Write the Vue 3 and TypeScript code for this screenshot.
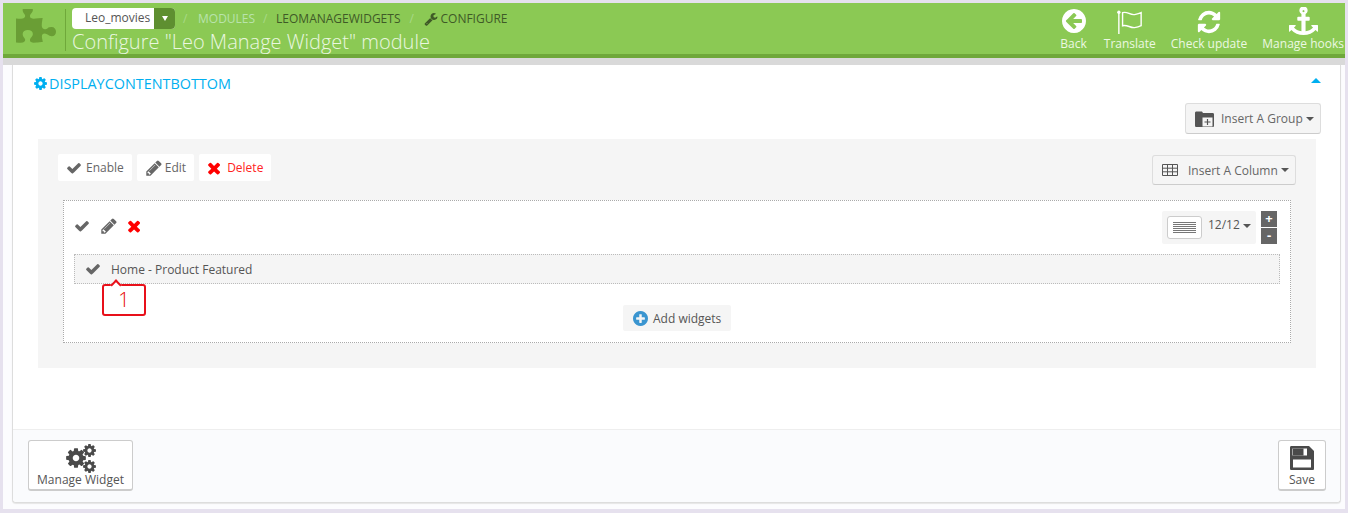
<script setup lang="ts">
const P = {
  check: 'M1671 566q0 40-28 68l-724 724-136 136q-28 28-68 28t-68-28l-136-136-362-362q-28-28-28-68t28-68l136-136q28-28 68-28t68 28l294 295 656-657q28-28 68-28t68 28l136 136q28 28 28 68z',
  times: 'M1298 1322q0 40-28 68l-136 136q-28 28-68 28t-68-28l-294-294-294 294q-28 28-68 28t-68-28l-136-136q-28-28-28-68t28-68l294-294-294-294q-28-28-28-68t28-68l136-136q28-28 68-28t68 28l294 294 294-294q28-28 68-28t68 28l136 136q28 28 28 68t-28 68l-294 294 294 294q28 28 28 68z',
  pencil: 'M491 1536l91-91-235-235-91 91v107h128v128h107zm523-928q0-22-22-22-10 0-17 7l-542 542q-7 7-7 17 0 22 22 22 10 0 17-7l542-542q7-7 7-17zm-54-192l416 416-832 832h-416v-416zm683 96q0 53-37 90l-166 166-416-416 166-165q36-38 90-38 53 0 91 38l235 234q37 39 37 91z',
  wrench: 'M448 1472q0-26-19-45t-45-19-45 19-19 45 19 45 45 19 45-19 19-45zm644-420l-682 682q-37 37-90 37-52 0-91-37l-106-108q-38-36-38-90 0-53 38-91l681-681q39 98 114.5 173.5t173.5 114.5zm634-435q0 39-23 106-47 134-164.5 217.5t-258.5 83.5q-185 0-316.5-131.5t-131.5-316.5 131.5-316.5 316.5-131.5q58 0 121.5 16.5t107.5 46.5q16 11 16 28t-16 28l-293 169v224l193 107q5-3 79-48.5t135.5-81 70.5-35.5q15 0 23.5 10t8.5 25z',
  cog: 'M1152 896q0-106-75-181t-181-75-181 75-75 181 75 181 181 75 181-75 75-181zm512-109v222q0 12-8 23t-20 13l-185 28q-19 54-39 91 35 50 107 138 10 12 10 25t-9 23q-27 37-99 108t-94 71q-12 0-26-9l-138-108q-44 23-91 38-16 136-29 186-7 28-36 28h-222q-14 0-24.5-8.5t-11.5-21.5l-28-184q-49-16-90-37l-141 107q-10 9-25 9-14 0-25-11-126-114-165-168-7-10-7-23 0-12 8-23 15-21 51-66.5t54-70.5q-27-50-41-99l-183-27q-13-2-21-12.5t-8-23.5v-222q0-12 8-23t19-13l186-28q14-46 39-92-40-57-107-138-10-12-10-24 0-10 9-23 26-36 98.5-107.5t94.5-71.5q13 0 26 10l138 107q44-23 91-38 16-136 29-186 7-28 36-28h222q14 0 24.5 8.5t11.5 21.5l28 184q49 16 90 37l142-107q9-9 24-9 13 0 25 10 129 119 165 170 7 8 7 22 0 12-8 23-15 21-51 66.5t-54 70.5q26 50 41 98l183 28q13 2 21 12.5t8 23.5z',
  refresh: 'M1639 1056q0 5-1 7-64 268-268 434.5t-478 166.5q-146 0-282.5-55t-243.5-157l-129 129q-19 19-45 19t-45-19-19-45v-448q0-26 19-45t45-19h448q26 0 45 19t19 45-19 45l-137 137q71 66 161 102t187 36q134 0 250-65t186-179q11-17 53-117 8-23 30-23h192q13 0 22.5 9.5t9.5 22.5zm25-800v448q0 26-19 45t-45 19h-448q-26 0-45-19t-19-45 19-45l138-138q-148-137-349-137-134 0-250 65t-186 179q-11 17-53 117-8 23-30 23h-199q-13 0-22.5-9.5t-9.5-22.5v-7q65-268 270-434.5t480-166.5q146 0 284 55.5t245 156.5l130-129q19-19 45-19t45 19 19 45z',
  anchor: 'M960 256q0-26-19-45t-45-19-45 19-19 45 19 45 45 19 45-19 19-45zm832 888v352q0 22-20 30-8 2-12 2-12 0-23-9l-93-93q-119 143-318.5 226.5t-429.5 83.5-429.5-83.5-318.5-226.5l-93 93q-9 9-23 9-4 0-12-2-20-8-20-30v-352q0-14 9-23t23-9h352q22 0 30 20 8 19-7 35l-100 100q67 91 189.5 153.5t271.5 82.5v-647h-192q-26 0-45-19t-19-45v-128q0-26 19-45t45-19h192v-163q-58-34-93-92.5t-35-128.5q0-106 75-181t181-75 181 75 75 181q0 70-35 128.5t-93 92.5v163h192q26 0 45 19t19 45v128q0 26-19 45t-45 19h-192v647q149-20 271.5-82.5t189.5-153.5l-100-100q-15-16-7-35 8-20 30-20h352q14 0 23 9t9 23z',
  back: 'M1280 960v-128q0-26-19-45t-45-19h-502l189-189q19-19 19-45t-19-45l-91-91q-18-18-45-18t-45 18l-362 362-91 91q-18 18-18 45t18 45l91 91 362 362q18 18 45 18t45-18l91-91q18-18 18-45t-18-45l-189-189h502q26 0 45-19t19-45zm256-64q0 209-103 385.5t-279.5 279.5-385.5 103-385.5-103-279.5-279.5-103-385.5 103-385.5 279.5-279.5 385.5-103 385.5 103 279.5 279.5 103 385.5z',
  plus: 'M1216 960v-128q0-26-19-45t-45-19h-256v-256q0-26-19-45t-45-19h-128q-26 0-45 19t-19 45v256h-256q-26 0-45 19t-19 45v128q0 26 19 45t45 19h256v256q0 26 19 45t45 19h128q26 0 45-19t19-45v-256h256q26 0 45-19t19-45zm320-64q0 209-103 385.5t-279.5 279.5-385.5 103-385.5-103-279.5-279.5-103-385.5 103-385.5 279.5-279.5 385.5-103 385.5 103 279.5 279.5 103 385.5z',
  puzzle: 'M1664 1098q0 81-44.5 135t-123.5 54q-41 0-77.5-17.5t-59-38-56.5-38-71-17.5q-110 0-110 124 0 39 16 115t15 115v5q-22 0-33 1-34 3-97.5 11.5t-115.5 13.5-98 5q-61 0-103-26.5t-42-83.5q0-37 17.5-71t38-56.5 38-59 17.5-77.5q0-79-54-123.5t-135-44.5q-84 0-143 45.5t-59 127.5q0 43 15 83t33.5 64.5 33.5 53 15 50.5q0 45-46 89-37 35-117 35-95 0-245-24-9-2-27.5-4t-27.5-4l-13-2q-2 0-3-1-2 0-2-1v-1024q2 1 17.5 3.5t34 5 21.5 3.5q150 24 245 24 80 0 117-35 46-44 46-89 0-22-15-50.5t-33.5-53-33.5-64.5-15-83q0-82 59-127.5t144-45.5q80 0 134 44.5t54 123.5q0 41-17.5 77.5t-38 59-38 56.5-17.5 71q0 57 42 83.5t103 26.5q64 0 180-15t163-17v2q-1 2-3.5 17.5t-5 34-3.5 21.5q-24 150-24 245 0 80 35 117 44 46 89 46 22 0 50.5-15t53-33.5 64.5-33.5 83-15q82 0 127.5 59t45.5 143z'
}
const V = '0 0 1792 1792'
</script>

<template>
  <div class="page">
    <header class="head">
      <svg class="puzzle" viewBox="128 128 1536 1536" preserveAspectRatio="none"><path :d="P.puzzle" /></svg>
      <div class="head-main">
        <div class="crumbs">
          <div class="shop"><span class="shop-name">Leo_movies</span><span class="shop-arrow"><i></i></span></div>
          <span class="sep s1">/</span>
          <span class="c-light">MODULES</span>
          <span class="sep s2">/</span>
          <span class="c-dark">LEOMANAGEWIDGETS</span>
          <span class="sep s3">/</span>
          <span class="c-dark c-conf"><svg class="wr" :viewBox="V"><path :d="P.wrench" /></svg>CONFIGURE</span>
        </div>
        <h1>Configure "Leo Manage Widget" module</h1>
      </div>
      <nav class="tools">
        <a class="tool t-back"><svg viewBox="0 128 1536 1536"><path :d="P.back" /></svg>Back</a>
        <a class="tool t-tr">
          <svg viewBox="0 0 28 26"><circle cx="2" cy="2.500" r="1.800" /><path class="fl" d="M2 3v23" /><path class="fl" d="M6 3c5-2 8 3 13 2 3-.5 5-1 7-2v14c-2 1-4 1.700-7 2-5 .5-8-3.500-13-2z" /></svg>Translate</a>
        <a class="tool t-ch"><svg :viewBox="V"><path :d="P.refresh" /></svg>Check update</a>
        <a class="tool t-mh"><svg :viewBox="V"><path :d="P.anchor" /></svg>Manage hooks</a>
      </nav>
    </header>
    <div class="strip"></div>

    <div class="area">
      <section class="panel">
        <div class="panel-body">
          <div class="heading">
            <span class="h-title"><svg :viewBox="V"><path :d="P.cog" /></svg>DISPLAYCONTENTBOTTOM</span>
            <i class="up"></i>
          </div>
          <div class="group-bar">
            <button class="btn b-group">
              <svg class="ic-folder" viewBox="0 0 19 16"><path d="M0 2C0 1 .6.500 1.500.500H7L8 2h9.500c1 0 1.500.5 1.500 1.500V14.500c0 1-.5 1.500-1.500 1.500h-16C.6 16 0 15.500 0 14.500z" /><rect x="7.500" y="6.500" width="10" height="9" fill="#f5f5f5" /><path d="M12.500 8v6M9.500 11h6" stroke="#555" stroke-width="1.200" fill="none" /></svg>
              Insert A Group<i class="caret"></i>
            </button>
          </div>
          <div class="group">
            <div class="group-top">
              <div class="acts">
                <a class="act"><svg :viewBox="V"><path :d="P.check" /></svg>Enable</a>
                <a class="act a-edit"><svg :viewBox="V"><path :d="P.pencil" /></svg>Edit</a>
                <a class="act red"><svg :viewBox="V"><path :d="P.times" /></svg>Delete</a>
              </div>
              <button class="btn b-col">
                <svg class="ic-table" viewBox="0 0 16 12"><path d="M.5.500h15v11H.5zM.5 4.200h15M.5 7.800h15M5.500.500v11M10.500.500v11" /></svg>
                Insert A Column<i class="caret"></i>
              </button>
            </div>
            <div class="column">
              <div class="col-top">
                <div class="col-icons">
                  <svg class="gr" :viewBox="V"><path :d="P.check" /></svg>
                  <svg class="gr pn" :viewBox="V"><path :d="P.pencil" /></svg>
                  <svg class="rd" :viewBox="V"><path :d="P.times" /></svg>
                </div>
                <div class="col-size">
                  <div class="size">
                    <span class="size-btn"><i></i></span>
                    <span class="size-val">12/12<i class="caret"></i></span>
                  </div>
                  <div class="pm"><span>+</span><span>-</span></div>
                </div>
              </div>
              <div class="widget">
                <svg :viewBox="V"><path :d="P.check" /></svg>
                <span>Home - Product Featured</span>
                <div class="callout">1</div>
              </div>
              <div class="add-row">
                <a class="add"><svg viewBox="0 128 1536 1536"><path :d="P.plus" /></svg>Add widgets</a>
              </div>
            </div>
          </div>
        </div>
        <footer class="foot">
          <button class="fbtn f-mg">
            <svg viewBox="0 0 34 33">
              <path transform="translate(0.5 4.5) scale(0.01283)" :d="P.cog" />
              <path transform="translate(18 1) scale(0.00837)" :d="P.cog" />
              <path transform="translate(18 17) scale(0.00837)" :d="P.cog" />
            </svg>
            Manage Widget
          </button>
          <button class="fbtn f-sv">
            <svg viewBox="0 0 24 24"><path d="M0 1.500C0 .5.500 0 1.500 0H19l5 5v17.500c0 1-.5 1.500-1.500 1.500h-21C.5 24 0 23.500 0 22.500z" fill="#4a4a4a" /><path d="M3 13.500h18V21.500H3z" fill="#fff" /><path d="M2.500 2.500h14.500v7H2.500z" fill="#fff" /><path d="M3 2.500h10.500v7H3z" fill="#4a4a4a" /></svg>
            Save
          </button>
        </footer>
      </section>
    </div>
  </div>
</template>

<style>
html, body { margin: 0; background: #e6e1ee; }
</style>

<style scoped>
.page {
  box-sizing: border-box;
  width: 1348px;
  height: 513px;
  padding: 3px 3px 4px;
  display: flex;
  flex-direction: column;
  background: #e6e1ee;
  font-family: "Open Sans", "Liberation Sans", sans-serif;
  font-size: 12px;
  color: #666;
  overflow: hidden;
}
.head {
  box-sizing: border-box;
  height: 55px;
  flex: none;
  background: #8bc954;
  border-bottom: 4px solid #6fa83a;
  display: flex;
  align-items: flex-start;
  padding: 0 1px 0 13px;
}
.puzzle { width: 40px; height: 36px; margin-top: 6px; fill: #6a9e35; flex: none; }
.head-main {
  margin: 6px 0 0 9px;
  padding-left: 6px;
  height: 42px;
  border-left: 1px solid #6fa83a;
  flex: 1;
  min-width: 0;
}
.crumbs { display: flex; align-items: center; height: 21px; margin-top: -1px; }
.shop {
  display: flex;
  width: 103px;
  height: 21px;
  border-radius: 4px;
  overflow: hidden;
  background: #fff;
  flex: none;
}
.shop-name { flex: 1; padding-left: 13px; line-height: 20px; color: #555; }
.shop-arrow { width: 21px; background: #5e8f30; display: flex; align-items: center; justify-content: center; }
.shop-arrow i { border: 3px solid transparent; border-top: 5px solid #fff; border-bottom: 0; }
.sep { color: #a8d987; width: 4px; }
.s1 { margin: 0 11px 0 8px; }
.s2 { margin: 0 9px 0 8px; }
.s3 { margin: 0 11px 0 9px; }
.c-light { color: #b9e3ac; }
.c-dark { color: #3f5a27; }
.c-conf { display: flex; align-items: center; }
.wr { width: 14px; height: 14px; fill: #3f5a27; margin-right: 2px; }
h1 {
  margin: 1px 0 0;
  font-size: 20px;
  font-weight: 300;
  line-height: 24px;
  color: #eaf7e0;
  white-space: nowrap;
}
.tools { display: flex; align-items: flex-start; flex: none; }
.tool {
  display: flex;
  flex-direction: column;
  align-items: center;
  color: #ecf8e2;
  white-space: nowrap;
  line-height: 16px;
  margin-top: 6px;
}
.tool svg { width: 26px; height: 26px; fill: #fff; margin-bottom: 1px; }
.t-back svg { width: 24px; height: 24px; margin: 0 0 3px; }
.t-tr { margin-left: 17px; }
.t-tr svg { fill: none; }
.t-tr circle { fill: #fff; }
.fl { stroke: #fff; stroke-width: 1.500; fill: none; }
.t-ch { margin-left: 15px; }
.t-mh { margin-left: 15px; }
.t-mh svg { width: 29px; height: 29px; margin: -2px 0 0; }
.strip { height: 7px; flex: none; background: #d9d9d9; }
.area {
  flex: 1;
  min-height: 0;
  padding: 0 4px 6px 9px;
  background: #fcfcfe;
  display: flex;
}
.panel {
  flex: 1;
  display: flex;
  flex-direction: column;
  background: #fff;
  border-left: 1px solid #ddd;
  border-right: 1px solid #ddd;
  border-bottom: 1px solid #ddd;
  box-shadow: 0 1px 1px #e6e6e6;
  border-radius: 0 0 4px 4px;
  min-width: 0;
}
.panel-body { flex: 1; padding: 0 19px 0 25px; }
.heading { display: flex; justify-content: space-between; align-items: center; height: 38px; }
.h-title {
  display: flex;
  align-items: center;
  color: #00aff0;
  font-size: 14.400px;
  margin-left: -5px;
  padding-bottom: 2px;
}
.h-title svg { width: 15px; height: 15px; fill: #00aff0; margin-right: 1px; }
.up { border: 5px solid transparent; border-bottom: 5px solid #00aff0; border-top: 0; margin: -8px 0 0; }
.group-bar { display: flex; justify-content: flex-end; height: 36px; }
.btn {
  font: inherit;
  color: #666;
  background: #f5f5f5;
  border: 1px solid #ddd;
  border-bottom-color: #ccc;
  border-radius: 3px;
  display: flex;
  align-items: center;
  padding: 0;
  cursor: pointer;
}
.caret { display: inline-block; border: 4px solid transparent; border-top: 4px solid #555; border-bottom: 0; margin-left: 3px; vertical-align: middle; }
.b-group { width: 136px; height: 31px; padding-left: 9px; }
.ic-folder { width: 19px; height: 16px; fill: #555; margin-right: 7px; }
.group {
  background: #f5f5f5;
  height: 229px;
  box-sizing: border-box;
  padding: 15px 20px 0;
  margin-right: 5px;
}
.group-top { display: flex; justify-content: space-between; align-items: flex-start; height: 46px; }
.acts { display: flex; gap: 5px; }
.act { display: flex; align-items: center; height: 27px; background: #fff; padding: 0 8px; color: #666; border-radius: 2px; }
.act svg { width: 16px; height: 16px; fill: #666; margin-right: 4px; }
.a-edit svg { width: 18px; height: 18px; margin-right: 2px; }
.act.red { color: #f22; }
.act.red svg { width: 18px; height: 18px; fill: #f00; margin-right: 2px; }
.b-col { width: 144px; height: 30px; margin-top: 1px; padding-left: 9px; }
.ic-table { width: 16px; height: 12px; fill: none; stroke: #555; stroke-width: 1; margin-right: 10px; }
.column {
  box-sizing: border-box;
  height: 143px;
  margin: 0 5px;
  background: #fff;
  border: 1px dotted #aaa;
  padding: 10px 10px 0;
}
.col-top { display: flex; justify-content: space-between; align-items: flex-start; height: 43px; }
.col-icons { display: flex; align-items: center; gap: 10px; height: 30px; }
.col-icons svg { width: 16px; height: 16px; }
.col-icons .pn { width: 18px; height: 18px; }
.col-icons .rd { width: 18px; height: 18px; margin-left: -1px; }
.gr { fill: #666; }
.rd { fill: #f00; }
.col-size { display: flex; margin-right: 3px; gap: 5px; }
.size {
  width: 94px;
  height: 33px;
  box-sizing: border-box;
  background: #f5f5f5;
  padding: 5px;
  display: flex;
  border-radius: 2px;
  white-space: nowrap;
}
.size-btn {
  box-sizing: border-box;
  flex: none;
  width: 35px;
  height: 23px;
  background: #fff;
  border: 1px solid #ccc;
  border-radius: 3px;
  display: flex;
  align-items: center;
  justify-content: center;
}
.size-btn i {
  display: block;
  width: 23px;
  height: 11px;
  background: repeating-linear-gradient(#777 0 1px, #fff 1px 2px);
}
.size-val { margin-left: 6px; line-height: 17px; color: #555; }
.pm { display: flex; flex-direction: column; gap: 1px; }
.pm span {
  width: 16px;
  height: 16px;
  background: #666;
  color: #fff;
  font-weight: 700;
  font-size: 13px;
  line-height: 15px;
  text-align: center;
}
.widget {
  position: relative;
  box-sizing: border-box;
  height: 30px;
  background: #f5f5f5;
  border: 1px dotted #bbb;
  display: flex;
  align-items: center;
  padding-left: 10px;
  color: #555;
}
.widget svg { width: 16px; height: 16px; fill: #666; margin-right: 10px; }
.callout {
  position: absolute;
  left: 27px;
  top: 29px;
  box-sizing: border-box;
  width: 44px;
  height: 32px;
  border: 2px solid #e8101a;
  border-radius: 3px;
  background: #fff;
  color: #e60000;
  font-size: 20px;
  font-weight: 300;
  line-height: 28px;
  text-align: center;
}
.callout::before {
  content: "";
  position: absolute;
  left: 8px;
  top: -5px;
  width: 6px;
  height: 6px;
  background: #fff;
  border-left: 2px solid #e8101a;
  border-top: 2px solid #e8101a;
  transform: rotate(45deg);
}
.add-row { display: flex; justify-content: center; padding-top: 21px; }
.add { display: flex; align-items: center; width: 108px; height: 26px; box-sizing: border-box; padding-left: 10px; background: #f5f5f5; color: #555; border-radius: 2px; }
.add svg { width: 15px; height: 15px; fill: #3a95d0; margin-right: 5px; }
.foot {
  flex: none;
  box-sizing: border-box;
  height: 73px;
  background: #fafbfd;
  border-top: 1px solid #eee;
  padding: 10px 14px 0 15px;
  display: flex;
  justify-content: space-between;
  align-items: flex-start;
  border-radius: 0 0 4px 4px;
}
.fbtn {
  font: inherit;
  color: #555;
  height: 51px;
  box-sizing: border-box;
  background: #fff;
  border: 1px solid #ccc;
  border-bottom: 2px solid #ccc;
  border-radius: 3px;
  display: flex;
  flex-direction: column;
  align-items: center;
  justify-content: flex-end;
  padding: 0 0 1px;
  line-height: 17px;
}
.f-mg { width: 105px; }
.f-mg svg { width: 34px; height: 33px; fill: #4a4a4a; margin-bottom: -4px; flex: none; }
.f-sv { width: 48px; }
.f-sv svg { width: 24px; height: 24px; margin-bottom: 1px; flex: none; }
</style>
